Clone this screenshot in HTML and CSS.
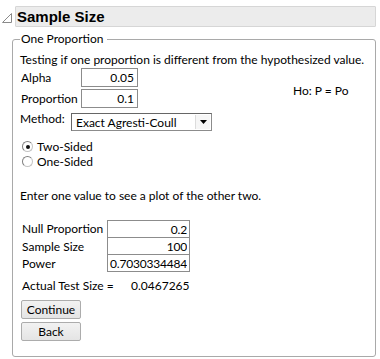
FILE: index.html
```html
<!DOCTYPE html>
<html lang="en">
<head>
    <meta charset="UTF-8">
    <title>Sample Size</title>
    <link rel="stylesheet" href="styles.css">
</head>
<body>
    <div class="report">
        <div class="outline-head">
            <svg class="disclosure" width="12" height="12" viewBox="0 0 12 12">
                <polygon points="1.5,10.5 10.5,1.5 10.5,10.5" fill="#fff" stroke="#8a8a8a" stroke-width="1"/>
            </svg>
            <div class="title-bar">Sample Size</div>
        </div>

        <fieldset class="panel">
            <legend>One Proportion</legend>
            <p class="note">Testing if one proportion is different from the hypothesized value.</p>

            <div class="params">
                <div class="param-list">
                    <div class="param">
                        <span class="param-label">Alpha</span>
                        <input class="num" type="text" value="0.05">
                    </div>
                    <div class="param">
                        <span class="param-label">Proportion</span>
                        <input class="num" type="text" value="0.1">
                    </div>
                </div>
                <div class="hypo">Ho: P = Po</div>
            </div>

            <div class="method">
                <span class="method-label">Method:</span>
                <div class="combo">
                    <span class="combo-text">Exact Agresti-Coull</span>
                    <span class="combo-btn">
                        <svg width="7" height="4" viewBox="0 0 7 4"><polygon points="0,0 7,0 3.5,4" fill="#000"/></svg>
                    </span>
                </div>
            </div>

            <div class="radios">
                <label class="radio"><span class="dot checked"></span>Two-Sided</label>
                <label class="radio"><span class="dot"></span>One-Sided</label>
            </div>

            <p class="hint">Enter one value to see a plot of the other two.</p>

            <div class="grid">
                <span>Null Proportion</span><input class="cell" type="text" value="0.2">
                <span>Sample Size</span><input class="cell" type="text" value="100">
                <span>Power</span><input class="cell" type="text" value="0.7030334484">
            </div>

            <div class="actual">
                <span class="actual-label">Actual Test Size =</span>
                <span>0.0467265</span>
            </div>

            <div class="buttons">
                <button>Continue</button>
                <button>Back</button>
            </div>
        </fieldset>
    </div>
</body>
</html>
```

FILE: styles.css
```css
body {
    margin: 0;
    background: #fff;
    font-family: Lato, "Noto Sans", sans-serif;
    font-size: 12px;
    color: #000;
}
.report {
    width: 380px;
    padding-top: 6px;
    white-space: nowrap;
}
.outline-head {
    display: flex;
    align-items: flex-end;
}
.disclosure {
    margin: 0 2px 3px 1px;
}
.title-bar {
    width: 358px;
    height: 19px;
    line-height: 19px;
    background: #ececec;
    border: 1px solid #d6d6d6;
    border-radius: 1px;
    font-family: "Liberation Sans", Arial, sans-serif;
    font-weight: bold;
    font-size: 15px;
    padding-left: 1px;
}
.panel {
    margin: 5px 4px 0 12px;
    padding: 0 0 15px 7px;
    border: 1px solid #a9a9a9;
    border-radius: 3px;
}
.panel legend {
    padding: 0 4px 0 1px;
    margin-left: 0;
    line-height: 14px;
}
.note {
    margin: 6px 0 0 0;
    line-height: 16px;
}
.params {
    display: flex;
    align-items: center;
}
.param-list {
    display: flex;
    flex-direction: column;
    gap: 2px;
    padding-left: 1px;
}
.param {
    display: flex;
    align-items: center;
}
.param-label {
    width: 60px;
}
.num, .cell {
    font-family: inherit;
    font-size: 12px;
    text-align: right;
    border: 1px solid #8c8c8c;
    margin: 0;
    padding: 0 3px 0 0;
    box-sizing: border-box;
    color: #000;
    background: #fff;
}
.num {
    width: 57px;
    height: 19px;
}
.hypo {
    margin-left: 155px;
    margin-top: 4px;
}
.method {
    display: flex;
    align-items: flex-start;
    margin-top: 5px;
    height: 18px;
}
.method-label {
    width: 51px;
    line-height: 11px;
}
.combo {
    display: flex;
    align-items: center;
    width: 141px;
    height: 18px;
    border: 1px solid #8c8c8c;
    border-top-color: #666;
    border-left-color: #666;
    box-sizing: border-box;
    background: #fff;
}
.combo-text {
    flex: 1;
    padding-left: 4px;
}
.combo-btn {
    width: 14px;
    height: 14px;
    margin-right: 1px;
    border-left: 1px solid #dcdcdc;
    background: #f6f6f6;
    display: flex;
    align-items: center;
    justify-content: center;
}
.radios {
    margin-top: 8px;
    display: flex;
    flex-direction: column;
}
.radio {
    display: flex;
    align-items: center;
    height: 15px;
    padding-left: 2px;
}
.dot {
    width: 9px;
    height: 9px;
    border-radius: 50%;
    border: 1px solid #c4c4c4;
    border-top-color: #808080;
    border-left-color: #808080;
    margin-right: 4px;
    position: relative;
    background: #fff;
}
.dot.checked::after {
    content: "";
    position: absolute;
    left: 2.5px;
    top: 2.5px;
    width: 4px;
    height: 4px;
    border-radius: 50%;
    background: #111;
}
.hint {
    margin: 19px 0 0 0;
    line-height: 16px;
}
.grid {
    display: grid;
    grid-template-columns: 85px 83px;
    margin-top: 16px;
    padding-left: 2px;
}
.grid span {
    line-height: 17px;
}
.cell {
    width: 83px;
    height: 18px;
    margin-top: -1px;
    padding-right: 2px;
    letter-spacing: -0.2px;
}
.grid .cell:first-of-type {
    margin-top: 0;
}
.actual {
    display: flex;
    margin-top: 6px;
    padding-left: 2px;
    line-height: 16px;
}
.actual-label {
    width: 109px;
}
.buttons {
    display: flex;
    flex-direction: column;
    gap: 3px;
    margin-top: 6px;
    padding-left: 1px;
}
.buttons button {
    width: 60px;
    height: 19px;
    font-family: inherit;
    font-size: 12px;
    padding: 0;
    border: 1px solid #acacac;
    border-radius: 2px;
    background: linear-gradient(#f2f2f2, #e4e4e4);
    color: #000;
}
```
